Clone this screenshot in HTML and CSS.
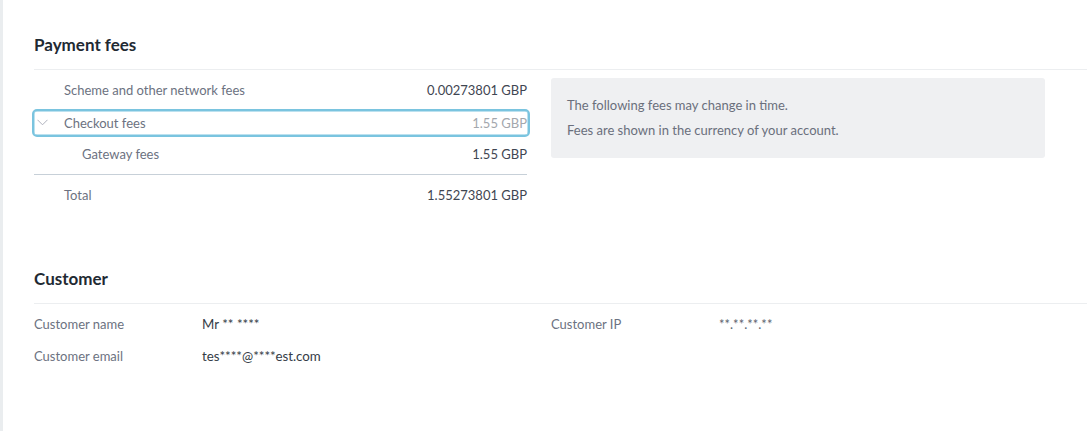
FILE: index.html
```html
<!DOCTYPE html>
<html>
<head>
<meta charset="utf-8">
<link rel="stylesheet" href="styles.css">
</head>
<body>
<div class="page">
  <section class="section">
    <h2 class="section-title">Payment fees</h2>
    <div class="fees-grid">
      <div class="fees-table">
        <div class="fee-row">
          <span class="fee-label">Scheme and other network fees</span>
          <span class="fee-value">0.00273801 GBP</span>
        </div>
        <div class="fee-row fee-row--group">
          <span class="fee-label">
            <svg class="chevron" width="11" height="7" viewBox="0 0 11 7"><polyline points="0.5,0.8 5.5,5.8 10.5,0.8" fill="none" stroke="#aeb1bd" stroke-width="1"/></svg>
            Checkout fees
          </span>
          <span class="fee-value fee-value--muted">1.55 GBP</span>
        </div>
        <div class="fee-row fee-row--child">
          <span class="fee-label">Gateway fees</span>
          <span class="fee-value">1.55 GBP</span>
        </div>
        <div class="fee-row fee-row--total">
          <span class="fee-label">Total</span>
          <span class="fee-value">1.55273801 GBP</span>
        </div>
      </div>
      <div class="info-box">
        <p>The following fees may change in time.</p>
        <p>Fees are shown in the currency of your account.</p>
      </div>
    </div>
  </section>

  <section class="section section--customer">
    <h2 class="section-title">Customer</h2>
    <div class="details-grid">
      <div class="detail-col">
        <div class="detail-row"><span class="detail-label">Customer name</span><span class="detail-value">Mr ** ****</span></div>
        <div class="detail-row"><span class="detail-label">Customer email</span><span class="detail-value">tes****@****est.com</span></div>
      </div>
      <div class="detail-col">
        <div class="detail-row"><span class="detail-label">Customer IP</span><span class="detail-value detail-value--small">**.**.**.**</span></div>
      </div>
    </div>
  </section>
</div>
</body>
</html>
```

FILE: styles.css
```css
* { box-sizing: border-box; }
html, body { margin: 0; padding: 0; background: #ffffff; }
body {
  font-family: Lato, "Open Sans", sans-serif;
  font-size: 13px;
  color: #6c7281;
}
.page {
  min-height: 431px;
  border-left: 3px solid #eaedef;
  padding: 21px 0 0 31px;
}
.section-title {
  margin: 0;
  padding: 12px 0;
  line-height: 24px;
  font-size: 17px;
  font-weight: 700;
  color: #1f2a33;
  border-bottom: 1px solid #eceef0;
}
.fees-grid {
  display: grid;
  grid-template-columns: 493px 494px;
  column-gap: 24px;
  align-items: start;
}
.fees-table { padding-top: 4px; }
.fee-row {
  display: flex;
  justify-content: space-between;
  align-items: center;
  height: 32px;
  padding-left: 30px;
}
.fee-label { display: flex; align-items: center; }
.fee-value { color: #3f4652; }
.fee-value--muted { color: #a3a7ad; }
.fee-row--group {
  height: 28px;
  margin: 3px -3px 1px -2px;
  padding: 0 1px 1px 30px;
  border: 2px solid #7ac4df;
  border-radius: 5px;
  box-shadow: inset 0 0 0 0.5px #7ac4df;
}
.chevron { margin-left: -27px; margin-right: 16px; }
.fee-row--child { padding-left: 48px; }
.fee-row--total {
  margin-top: 4px;
  height: 37px;
  padding-top: 4px;
  border-top: 1px solid #c7d0d8;
}
.info-box {
  margin-top: 8px;
  background: #eff0f2;
  border-radius: 3px;
  padding: 15px 16px;
  line-height: 25px;
  font-size: 13px;
  color: #6a6f7c;
}
.info-box p { margin: 0; }
.section--customer { margin-top: 44px; }
.details-grid {
  display: grid;
  grid-template-columns: 493px 494px;
  column-gap: 24px;
  padding-top: 4px;
}
.detail-row {
  display: flex;
  align-items: center;
  height: 32px;
}
.detail-label { width: 168px; flex: none; }
.detail-value { color: #343c46; font-size: 13.3px; }
.detail-value--small { font-size: 13px; color: #5d6570; }
```
